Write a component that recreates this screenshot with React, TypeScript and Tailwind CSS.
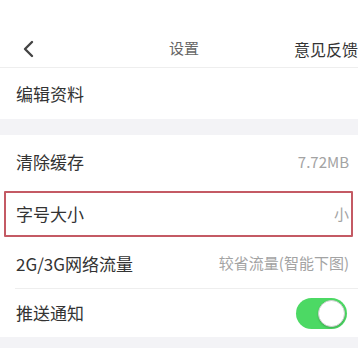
import React from "react"

const font = { fontFamily: '"Noto Sans CJK SC", "Noto Sans", sans-serif' }

function Row({
  label,
  value,
  children,
  className = "",
}: {
  label: string
  value?: string
  children?: React.ReactNode
  className?: string
}) {
  return (
    <div className={`relative flex items-center justify-between bg-white pl-4 pr-[9px] ${className}`}>
      <span className="text-[17px] text-[#333]">{label}</span>
      {value && <span className="text-[15px] text-[#a3a3a3]">{value}</span>}
      {children}
    </div>
  )
}

export default function App() {
  return (
    <div className="w-[358px] h-[348px] overflow-hidden bg-[#f3f3f6]" style={font}>
      <div className="h-[30px] bg-white" />
      <div className="flex h-[38px] items-center justify-between bg-white border-b border-[#eeeeee] pl-[22px]">
        <svg width="12" height="18" viewBox="0 0 12 18" fill="none">
          <path d="M10 2L3 9l7 7" stroke="#444" strokeWidth="2.4" strokeLinecap="round" strokeLinejoin="round" />
        </svg>
        <span className="ml-[135px] text-[15px] text-[#666]">设置</span>
        <span className="flex-1 text-right whitespace-nowrap text-[16px] text-[#333]">意见反馈</span>
      </div>

      <Row label="编辑资料" className="h-[51px]" />

      <div className="h-[16px]" />

      <Row label="清除缓存" value="7.72MB" className="h-[54px]" />
      <Row label="字号大小" value="小" className="h-[50px]">
        <div className="absolute left-[4px] right-[5px] top-[2px] bottom-[2px] border-2 border-[#c45a64] rounded-[1px]" />
      </Row>
      <Row label="2G/3G网络流量" value="较省流量(智能下图)" className="h-[49px]" />
      <div className="bg-white pl-[15px]">
        <div className="h-px bg-[#eeeeee]" />
      </div>
      <Row label="推送通知" className="h-[48px]">
        <div className="flex h-[31px] w-[51px] items-center justify-end rounded-full bg-[#4cd964] pr-[2px] mr-[2px]">
          <div className="h-[27px] w-[27px] rounded-full bg-white border border-[#d0d0d0] shadow-[0_1px_2px_rgba(0,0,0,0.2)]" />
        </div>
      </Row>
    </div>
  )
}
